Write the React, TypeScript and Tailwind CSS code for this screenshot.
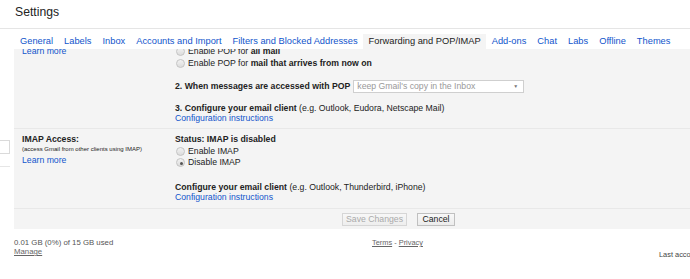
import React from 'react';

const tabs = [
  'General',
  'Labels',
  'Inbox',
  'Accounts and Import',
  'Filters and Blocked Addresses',
  'Forwarding and POP/IMAP',
  'Add-ons',
  'Chat',
  'Labs',
  'Offline',
  'Themes',
];

const Radio: React.FC<{ checked?: boolean }> = ({ checked }) => (
  <span className="relative inline-block w-[9px] h-[9px] rounded-full border border-[#c4c4c4] bg-gradient-to-b from-[#f2f2f2] to-[#dcdcdc] shrink-0">
    {checked && <span className="absolute left-[2.5px] top-[2.5px] w-[3px] h-[3px] rounded-full bg-[#555]"></span>}
  </span>
);

const RadioLine: React.FC<{ checked?: boolean; children: React.ReactNode }> = ({ checked, children }) => (
  <div className="flex items-center gap-[3px] h-[11.5px] pl-px">
    <Radio checked={checked} />
    <span>{children}</span>
  </div>
);

const App: React.FC = () => {
  return (
    <div className="w-[690px] h-[279px] overflow-hidden bg-white text-[#222] font-['Liberation_Sans',Arial,sans-serif] whitespace-nowrap">
      {/* header */}
      <div className="h-[29px] border-b border-[#e5e5e5] pl-[15px] pt-[4px]">
        <h1 className="text-[12.2px] leading-[17px] font-normal text-[#222]">Settings</h1>
      </div>

      {/* tab bar */}
      <div className="h-[20px] pt-[5px] pl-[14.5px] flex">
        {tabs.map((t) => (
          <div
            key={t}
            className={`px-[5.5px] h-[15px] text-[9.3px] leading-[15px] ${
              t === 'Forwarding and POP/IMAP' ? 'bg-[#f4f4f4] text-[#222]' : 'text-[#15c]'
            }`}
          >
            {t}
          </div>
        ))}
      </div>

      {/* body */}
      <div className="flex">
        <div className="w-[14px] shrink-0 pt-[91px]">
          <div className="-ml-[2px] w-[12px] h-[14px] border border-[#dadada] bg-white"></div>
          <div className="mt-[12px] h-px w-[10px] bg-[#e6e6e6]"></div>
        </div>

        <div className="flex-1 h-[180px] bg-[#f4f4f4] overflow-hidden text-[8.7px]">
          {/* POP row (scrolled) */}
          <div className="grid grid-cols-[153px_1fr] pl-[8px] pb-[5px] border-b border-[#e8e8e8]">
            <div className="-mt-[3.5px]">
              <div className="leading-[10.5px] text-[#15c]">Learn more</div>
            </div>
            <div className="-mt-[3px]">
              <RadioLine>
                Enable POP for <b>all mail</b>
              </RadioLine>
              <RadioLine>
                Enable POP for <b>mail that arrives from now on</b>
              </RadioLine>
              <div className="mt-[11px] flex items-center h-[13px]">
                <b>2. When messages are accessed with POP</b>
                <div className="ml-[3px] w-[171px] h-[13px] border border-[#cfcfcf] bg-white flex items-center justify-between pl-[3px] pr-[5px]">
                  <span className="text-[#999]">keep Gmail's copy in the Inbox</span>
                  <span className="text-[5px] text-[#777]">▼</span>
                </div>
              </div>
              <div className="mt-[10px] leading-[10px]">
                <b>3. Configure your email client</b> (e.g. Outlook, Eudora, Netscape Mail)
              </div>
              <div className="leading-[10px] text-[#15c]">Configuration instructions</div>
            </div>
          </div>

          {/* IMAP row */}
          <div className="grid grid-cols-[153px_1fr] pl-[8px] pt-[5px] pb-[5.5px] border-b border-[#e8e8e8]">
            <div>
              <div className="leading-[11.5px] font-bold">IMAP Access:</div>
              <div className="leading-[7px] text-[6px]">(access Gmail from other clients using IMAP)</div>
              <div className="mt-[2px] leading-[10.5px] text-[#15c]">Learn more</div>
            </div>
            <div>
              <div className="leading-[11.5px] font-bold">Status: IMAP is disabled</div>
              <RadioLine>Enable IMAP</RadioLine>
              <RadioLine checked>Disable IMAP</RadioLine>
              <div className="mt-[13px] leading-[10.5px]">
                <b>Configure your email client</b> (e.g. Outlook, Thunderbird, iPhone)
              </div>
              <div className="leading-[10.5px] text-[#15c]">Configuration instructions</div>
            </div>
          </div>

          {/* buttons */}
          <div className="pt-[4px] pl-[328px] flex gap-[10px]">
            <button className="h-[13px] w-[65px] border border-[#d6d6d6] bg-gradient-to-b from-[#f7f7f7] to-[#eeeeee] text-[#aaa] text-[8.7px] leading-[11px]">
              Save Changes
            </button>
            <button className="h-[13px] w-[38px] border border-[#c0c0c0] bg-gradient-to-b from-[#f8f8f8] to-[#ececec] text-[#222] text-[8.7px] leading-[11px]">
              Cancel
            </button>
          </div>
        </div>
      </div>

      {/* footer */}
      <div className="flex pt-[9px] text-[#555]">
        <div className="w-[372px] pl-[14px] shrink-0">
          <div className="text-[7.8px] leading-[9px]">0.01 GB (0%) of 15 GB used</div>
          <div className="text-[7.8px] leading-[9px] underline text-[#666]">Manage</div>
        </div>
        <div className="w-[287px] shrink-0 text-[7.4px] leading-[9px] text-[#666]">
          <span className="underline">Terms</span> - <span className="underline">Privacy</span>
        </div>
        <div className="pt-[12px] text-[7.4px] leading-[9px] text-[#444]">Last account activity: 0 minutes ago</div>
      </div>
    </div>
  );
};

export default App;
